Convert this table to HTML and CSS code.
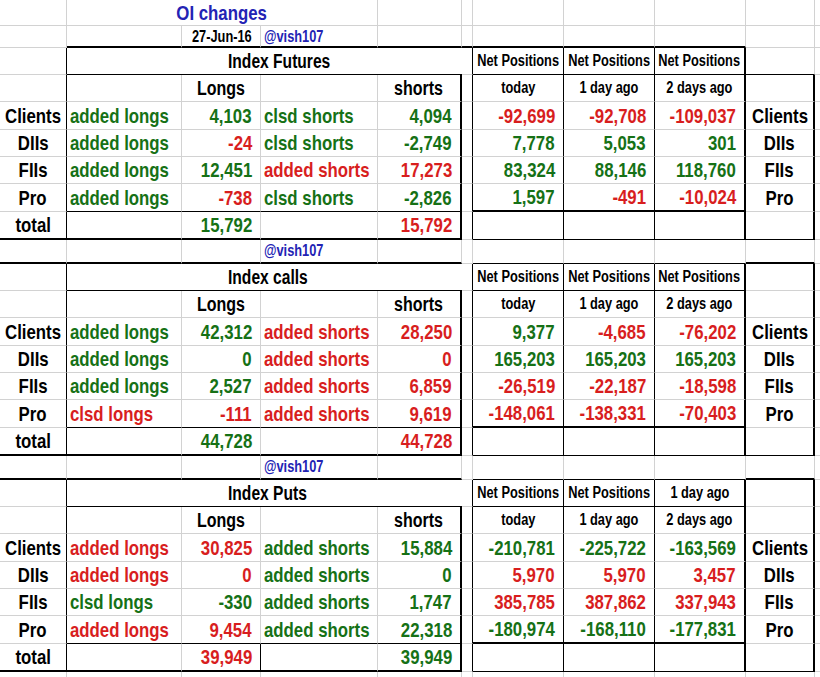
FILE: index.html
```html
<!DOCTYPE html>
<html>
<head>
<meta charset="utf-8">
<link rel="stylesheet" href="styles.css">
</head>
<body>
<div class="sheet">
  <!-- row 1 -->
  <div class="c"></div>
  <div class="c m bl title sp3"><span>OI changes</span></div>
  <div class="c"></div><div class="c"></div><div class="c"></div><div class="c"></div><div class="c"></div><div class="c"></div><div class="c"></div>
  <!-- row 2 -->
  <div class="c"></div>
  <div class="c tB"></div>
  <div class="c r s tB low"><span>27-Jun-16</span></div>
  <div class="c l s bl tB low"><span>@vish107</span></div>
  <div class="c tB"></div><div class="c tB"></div><div class="c tB"></div><div class="c tB"></div><div class="c tB"></div>
  <div class="c"></div><div class="c"></div>

  <!-- ===== Index Futures ===== -->
  <div class="c bR"></div>
  <div class="c l h nR bB sp4 hd"><span>Index Futures</span></div>
  <div class="c bR"></div>
  <div class="c m s bR bB"><span>Net Positions</span></div>
  <div class="c m s bR bB"><span>Net Positions</span></div>
  <div class="c m s tR bB"><span>Net Positions</span></div>
  <div class="c bB"></div><div class="c"></div>

  <div class="c bR"></div><div class="c"></div>
  <div class="c m h"><span>Longs</span></div><div class="c"></div>
  <div class="c m h tR"><span>shorts</span></div><div class="c bR"></div>
  <div class="c m s bR"><span>today</span></div><div class="c m s bR"><span>1 day ago</span></div><div class="c m s tR"><span>2 days ago</span></div>
  <div class="c tR"></div><div class="c"></div>

  <div class="c m bR"><span>Clients</span></div>
  <div class="c l g"><span>added longs</span></div><div class="c r g"><span>4,103</span></div>
  <div class="c l g"><span>clsd shorts</span></div><div class="c r g tR"><span>4,094</span></div><div class="c bR"></div>
  <div class="c r x bR"><span>-92,699</span></div><div class="c r x bR"><span>-92,708</span></div><div class="c r x tR"><span>-109,037</span></div>
  <div class="c m tR"><span>Clients</span></div><div class="c"></div>

  <div class="c m bR"><span>DIIs</span></div>
  <div class="c l g"><span>added longs</span></div><div class="c r x"><span>-24</span></div>
  <div class="c l g"><span>clsd shorts</span></div><div class="c r g tR"><span>-2,749</span></div><div class="c bR"></div>
  <div class="c r g bR"><span>7,778</span></div><div class="c r g bR"><span>5,053</span></div><div class="c r g tR"><span>301</span></div>
  <div class="c m tR"><span>DIIs</span></div><div class="c"></div>

  <div class="c m bR"><span>FIIs</span></div>
  <div class="c l g"><span>added longs</span></div><div class="c r g"><span>12,451</span></div>
  <div class="c l x"><span>added shorts</span></div><div class="c r x tR"><span>17,273</span></div><div class="c bR"></div>
  <div class="c r g bR"><span>83,324</span></div><div class="c r g bR"><span>88,146</span></div><div class="c r g tR"><span>118,760</span></div>
  <div class="c m tR"><span>FIIs</span></div><div class="c"></div>

  <div class="c m bR"><span>Pro</span></div>
  <div class="c l g bB"><span>added longs</span></div><div class="c r x bB"><span>-738</span></div>
  <div class="c l g bB"><span>clsd shorts</span></div><div class="c r g tR bB"><span>-2,826</span></div><div class="c bR"></div>
  <div class="c r g bR tB"><span>1,597</span></div><div class="c r x bR tB"><span>-491</span></div><div class="c r x tR tB"><span>-10,024</span></div>
  <div class="c m tR"><span>Pro</span></div><div class="c"></div>

  <div class="c m bR tB"><span>total</span></div>
  <div class="c tB"></div><div class="c r g tB"><span>15,792</span></div>
  <div class="c tB"></div><div class="c r x tR tB"><span>15,792</span></div><div class="c bR"></div>
  <div class="c bR bB"></div><div class="c bR bB"></div><div class="c tR bB"></div>
  <div class="c tR bB"></div><div class="c"></div>

  <div class="c tB"></div><div class="c tB"></div><div class="c tB"></div>
  <div class="c l s bl tB"><span>@vish107</span></div><div class="c tB"></div><div class="c"></div>
  <div class="c bB"></div><div class="c bB"></div><div class="c bB"></div>
  <div class="c tB"></div><div class="c"></div>

  <!-- ===== Index calls ===== -->
  <div class="c bR"></div>
  <div class="c l h nR bB sp4 hd"><span>Index calls</span></div>
  <div class="c bR"></div>
  <div class="c m s bR bB"><span>Net Positions</span></div>
  <div class="c m s bR bB"><span>Net Positions</span></div>
  <div class="c m s tR bB"><span>Net Positions</span></div>
  <div class="c tR"></div><div class="c"></div>

  <div class="c bR"></div><div class="c"></div>
  <div class="c m h"><span>Longs</span></div><div class="c"></div>
  <div class="c m h tR"><span>shorts</span></div><div class="c bR"></div>
  <div class="c m s bR"><span>today</span></div><div class="c m s bR"><span>1 day ago</span></div><div class="c m s tR"><span>2 days ago</span></div>
  <div class="c tR"></div><div class="c"></div>

  <div class="c m bR"><span>Clients</span></div>
  <div class="c l g"><span>added longs</span></div><div class="c r g"><span>42,312</span></div>
  <div class="c l x"><span>added shorts</span></div><div class="c r x tR"><span>28,250</span></div><div class="c bR"></div>
  <div class="c r g bR"><span>9,377</span></div><div class="c r x bR"><span>-4,685</span></div><div class="c r x tR"><span>-76,202</span></div>
  <div class="c m tR"><span>Clients</span></div><div class="c"></div>

  <div class="c m bR"><span>DIIs</span></div>
  <div class="c l g"><span>added longs</span></div><div class="c r g"><span>0</span></div>
  <div class="c l x"><span>added shorts</span></div><div class="c r x tR"><span>0</span></div><div class="c bR"></div>
  <div class="c r g bR"><span>165,203</span></div><div class="c r g bR"><span>165,203</span></div><div class="c r g tR"><span>165,203</span></div>
  <div class="c m tR"><span>DIIs</span></div><div class="c"></div>

  <div class="c m bR"><span>FIIs</span></div>
  <div class="c l g"><span>added longs</span></div><div class="c r g"><span>2,527</span></div>
  <div class="c l x"><span>added shorts</span></div><div class="c r x tR"><span>6,859</span></div><div class="c bR"></div>
  <div class="c r x bR"><span>-26,519</span></div><div class="c r x bR"><span>-22,187</span></div><div class="c r x tR"><span>-18,598</span></div>
  <div class="c m tR"><span>FIIs</span></div><div class="c"></div>

  <div class="c m bR"><span>Pro</span></div>
  <div class="c l x bB"><span>clsd longs</span></div><div class="c r x bB"><span>-111</span></div>
  <div class="c l x bB"><span>added shorts</span></div><div class="c r x tR bB"><span>9,619</span></div><div class="c bR"></div>
  <div class="c r x bR tB"><span>-148,061</span></div><div class="c r x bR tB"><span>-138,331</span></div><div class="c r x tR tB"><span>-70,403</span></div>
  <div class="c m tR"><span>Pro</span></div><div class="c"></div>

  <div class="c m bR tB"><span>total</span></div>
  <div class="c tB"></div><div class="c r g tB"><span>44,728</span></div>
  <div class="c tB"></div><div class="c r x tR tB"><span>44,728</span></div><div class="c bR"></div>
  <div class="c bR bB"></div><div class="c bR bB"></div><div class="c tR bB"></div>
  <div class="c tR bB"></div><div class="c"></div>

  <div class="c tB"></div><div class="c tB"></div><div class="c tB"></div>
  <div class="c l s bl tB"><span>@vish107</span></div><div class="c tB"></div><div class="c"></div>
  <div class="c bB"></div><div class="c bB"></div><div class="c bB"></div>
  <div class="c tB"></div><div class="c"></div>

  <!-- ===== Index Puts ===== -->
  <div class="c bR"></div>
  <div class="c l h nR bB sp4 hd"><span>Index Puts</span></div>
  <div class="c bR"></div>
  <div class="c m s bR bB"><span>Net Positions</span></div>
  <div class="c m s bR bB"><span>Net Positions</span></div>
  <div class="c m s tR bB"><span>1 day ago</span></div>
  <div class="c tR"></div><div class="c"></div>

  <div class="c bR"></div><div class="c"></div>
  <div class="c m h"><span>Longs</span></div><div class="c"></div>
  <div class="c m h tR"><span>shorts</span></div><div class="c bR"></div>
  <div class="c m s bR"><span>today</span></div><div class="c m s bR"><span>1 day ago</span></div><div class="c m s tR"><span>2 days ago</span></div>
  <div class="c tR"></div><div class="c"></div>

  <div class="c m bR"><span>Clients</span></div>
  <div class="c l x"><span>added longs</span></div><div class="c r x"><span>30,825</span></div>
  <div class="c l g"><span>added shorts</span></div><div class="c r g tR"><span>15,884</span></div><div class="c bR"></div>
  <div class="c r g bR"><span>-210,781</span></div><div class="c r g bR"><span>-225,722</span></div><div class="c r g tR"><span>-163,569</span></div>
  <div class="c m tR"><span>Clients</span></div><div class="c"></div>

  <div class="c m bR"><span>DIIs</span></div>
  <div class="c l x"><span>added longs</span></div><div class="c r x"><span>0</span></div>
  <div class="c l g"><span>added shorts</span></div><div class="c r g tR"><span>0</span></div><div class="c bR"></div>
  <div class="c r x bR"><span>5,970</span></div><div class="c r x bR"><span>5,970</span></div><div class="c r x tR"><span>3,457</span></div>
  <div class="c m tR"><span>DIIs</span></div><div class="c"></div>

  <div class="c m bR"><span>FIIs</span></div>
  <div class="c l g"><span>clsd longs</span></div><div class="c r g"><span>-330</span></div>
  <div class="c l g"><span>added shorts</span></div><div class="c r g tR"><span>1,747</span></div><div class="c bR"></div>
  <div class="c r x bR"><span>385,785</span></div><div class="c r x bR"><span>387,862</span></div><div class="c r x tR"><span>337,943</span></div>
  <div class="c m tR"><span>FIIs</span></div><div class="c"></div>

  <div class="c m bR"><span>Pro</span></div>
  <div class="c l x bB"><span>added longs</span></div><div class="c r x bB"><span>9,454</span></div>
  <div class="c l g bB"><span>added shorts</span></div><div class="c r g tR bB"><span>22,318</span></div><div class="c bR"></div>
  <div class="c r g bR tB"><span>-180,974</span></div><div class="c r g bR tB"><span>-168,110</span></div><div class="c r g tR tB"><span>-177,831</span></div>
  <div class="c m tR"><span>Pro</span></div><div class="c"></div>

  <div class="c m bR tB"><span>total</span></div>
  <div class="c tB"></div><div class="c r x tB bR"><span>39,949</span></div>
  <div class="c tB"></div><div class="c r g tR tB"><span>39,949</span></div><div class="c bR"></div>
  <div class="c bR bB"></div><div class="c bR bB"></div><div class="c tR bB"></div>
  <div class="c tR bB"></div><div class="c"></div>

  <div class="c"></div><div class="c"></div><div class="c"></div><div class="c"></div><div class="c"></div><div class="c"></div>
  <div class="c"></div><div class="c"></div><div class="c"></div><div class="c"></div><div class="c"></div>
</div>
</body>
</html>
```
FILE: styles.css
```css
html, body {
  margin: 0;
  padding: 0;
  background: #ffffff;
  overflow: hidden;
}
body {
  font-family: "Liberation Sans", Arial, sans-serif;
  font-weight: bold;
  color: #000;
}
.sheet {
  display: grid;
  width: 820px;
  grid-template-columns: 67px 115px 79px 117px 84px 11px 91px 91px 91px 69px 5px;
  grid-template-rows: 26px 22px
    27px 27px 28px 27px 27px 28px 28px 24px
    27px 27px 28px 27px 27px 28px 28px 24px
    27px 27px 28px 27px 27px 28px 28px 24px;
}
.c {
  box-sizing: border-box;
  border-right: 1px solid #d2d2d2;
  border-bottom: 1px solid #d2d2d2;
  display: flex;
  align-items: center;
  white-space: nowrap;
  min-width: 0;
  font-size: 21px;
  padding: 0 3px;
}
.c > span {
  display: inline-block;
  transform: scaleX(0.8);
  transform-origin: center;
}
.l { justify-content: flex-start; }
.l > span { transform-origin: left center; }
.r { justify-content: flex-end; padding-right: 8px; }
.r > span { transform-origin: right center; }
.m { justify-content: center; }
.m > span { transform-origin: center; }
.low { align-items: flex-end; }
.g { color: #167116; }
.x { color: #d81e1e; }
.bl { color: #2323b4; }
.s { font-size: 16px; }
.h { font-size: 20px; }
.title { font-size: 21px; }
.hd { padding-left: 161px; }
.hd > span { font-size: 19.5px; }
.sp3 { grid-column: span 3; }
.sp4 { grid-column: span 4; }
.nR { border-right: none; }
.bR { border-right: 1px solid #000; }
.tR { border-right: 2px solid #000; }
.bB { border-bottom: 1px solid #000; }
.tB { border-bottom: 2px solid #000; }
```
